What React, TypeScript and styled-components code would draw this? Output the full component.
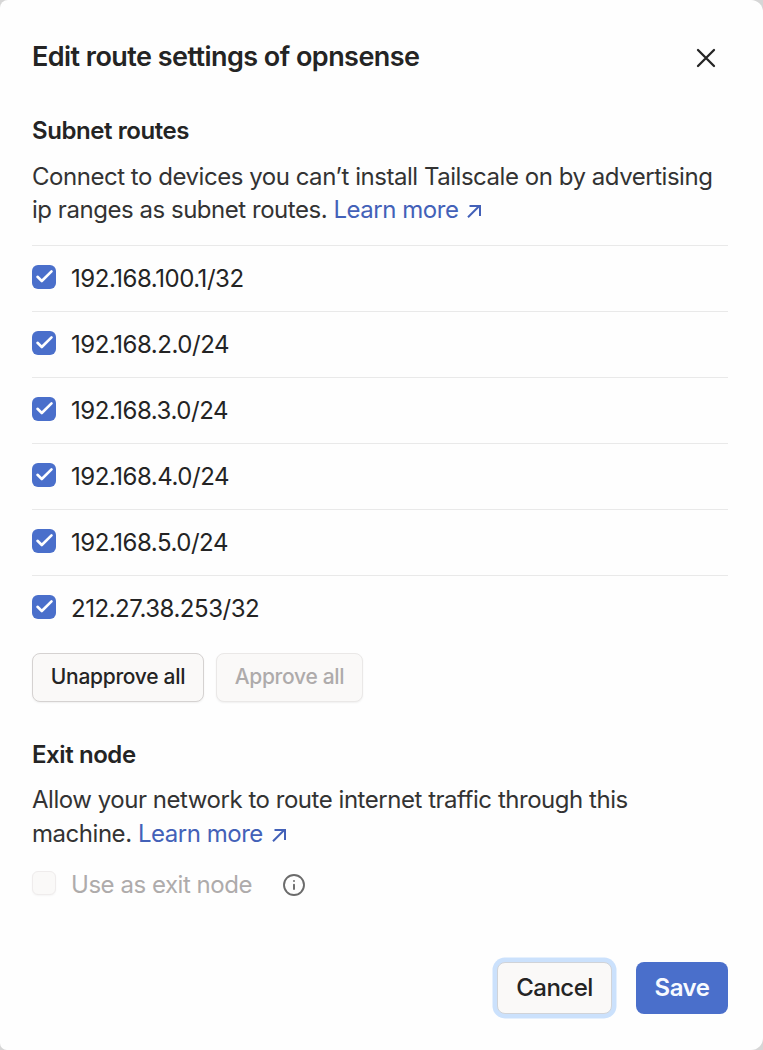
import React from "react";
import styled, { createGlobalStyle } from "styled-components";

const GlobalStyle = createGlobalStyle`
  *, *::before, *::after { box-sizing: border-box; }
  body {
    margin: 0;
    background: #d6d6d6;
    font-family: Inter, "Liberation Sans", sans-serif;
    color: #242424;
  }
`;

const Dialog = styled.main`
  display: flex;
  flex-direction: column;
  width: 763px;
  height: 1050px;
  padding: 40px 35px 36px 32px;
  background: #fefefe;
  border-radius: 8px 12px 12px 7px;
  overflow: hidden;
`;

const Header = styled.header`
  display: flex;
  align-items: center;
  justify-content: space-between;
  height: 33px;
`;

const Title = styled.h1`
  margin: 0;
  font-size: 27px;
  line-height: 33px;
  font-weight: 600;
  letter-spacing: -0.55px;
  white-space: nowrap;
`;

const CloseButton = styled.button`
  display: flex;
  margin: 2px 12px 0 0;
  padding: 0;
  border: 0;
  background: none;
  color: #242424;
`;

const Section = styled.section<{ $top: number }>`
  display: flex;
  flex-direction: column;
  margin-top: ${(p) => p.$top}px;
`;

const SectionTitle = styled.h2`
  margin: 0;
  font-size: 24px;
  line-height: 33px;
  font-weight: 600;
  letter-spacing: -0.42px;
`;

const Description = styled.p<{ $top: number; $lineHeight: number }>`
  margin: ${(p) => p.$top}px 0 0;
  font-size: 24px;
  line-height: ${(p) => p.$lineHeight}px;
  letter-spacing: -0.465px;
  color: #333333;
  white-space: nowrap;
`;

const Link = styled.a`
  color: #4361b8;
  text-decoration: none;

  svg {
    margin-left: 9px;
  }
`;

const RouteList = styled.ul`
  margin: 19px 0 0;
  padding: 0;
  list-style: none;
`;

const RouteItem = styled.li`
  height: 66px;
  padding-top: 16px;
  border-top: 1px solid #e9e9e9;
`;

const CheckLabel = styled.label<{ $disabled?: boolean }>`
  display: flex;
  gap: 15px;
  font-size: 24px;
  line-height: 33px;
  letter-spacing: -0.465px;
  color: ${(p) => (p.$disabled ? "#aeabab" : "#242424")};
  white-space: nowrap;
`;

const CheckBox = styled.span<{ $checked: boolean }>`
  display: flex;
  width: 24px;
  height: 24px;
  margin-top: 3px;
  border-radius: 6px;
  border: ${(p) => (p.$checked ? "0" : "1px solid #efecec")};
  background: ${(p) => (p.$checked ? "#4a6fcb" : "#faf9f8")};
  box-shadow: ${(p) => (p.$checked ? "none" : "0 1px 2px rgba(0, 0, 0, 0.04)")};
`;

const ButtonRow = styled.div`
  display: flex;
  gap: 12px;
  margin-top: 12px;
`;

const SmallButton = styled.button<{ $width: number }>`
  width: ${(p) => p.$width}px;
  height: 49px;
  padding: 0 0 2px;
  border: 1px solid #d5d2d1;
  border-radius: 8px;
  background: #faf9f8;
  box-shadow: 0 1px 2px rgba(0, 0, 0, 0.06);
  font: 500 21px/30px Inter, "Liberation Sans", sans-serif;
  letter-spacing: -0.3px;
  color: #242424;
  white-space: nowrap;

  &:disabled {
    border-color: #eae8e7;
    color: #aeabab;
  }
`;

const ExitRow = styled.div`
  display: flex;
  align-items: center;
  gap: 30px;
  margin-top: 18px;
`;

const Footer = styled.footer`
  display: flex;
  justify-content: flex-end;
  gap: 24px;
  margin-top: auto;
`;

const ActionButton = styled.button<{ $primary?: boolean }>`
  width: ${(p) => (p.$primary ? 92 : 115)}px;
  height: 52px;
  padding: 0 0 2px;
  border: ${(p) => (p.$primary ? "0" : "1px solid #d0d3d8")};
  border-radius: 8px;
  background: ${(p) => (p.$primary ? "#4a6fcb" : "#faf9f8")};
  box-shadow: ${(p) => (p.$primary ? "none" : "0 0 0 4.5px #cbe1fc")};
  color: ${(p) => (p.$primary ? "#f7faff" : "#242424")};
  font: ${(p) => (p.$primary ? 600 : 500)} 24px/33px Inter, "Liberation Sans", sans-serif;
  letter-spacing: -0.5px;
`;

const CheckIcon = () => (
  <svg width="24" height="24" viewBox="0 0 24 24" fill="none" stroke="#fff" strokeWidth="2.6" strokeLinecap="round" strokeLinejoin="round">
    <path d="M5.5 11.8 9.8 16 19.5 6.3" />
  </svg>
);

const ArrowIcon = () => (
  <svg width="14" height="14" viewBox="0 0 14 14" fill="none" stroke="currentColor" strokeWidth="2">
    <path d="M1 13.3 12.5 1.8M2.5 2H13V12" />
  </svg>
);

const InfoIcon = () => (
  <svg width="24" height="24" viewBox="0 0 24 24" fill="none" stroke="#6b6b6b" strokeWidth="1.9" strokeLinecap="round">
    <circle cx="12" cy="12" r="10" />
    <path d="M12 11.7V16M12 8H12.01" />
  </svg>
);

const LearnMore = () => (
  <Link>
    Learn more
    <ArrowIcon />
  </Link>
);

const routes = [
  "192.168.100.1/32",
  "192.168.2.0/24",
  "192.168.3.0/24",
  "192.168.4.0/24",
  "192.168.5.0/24",
  "212.27.38.253/32",
];

export default function App() {
  return (
    <>
      <GlobalStyle />
      <Dialog>
        <Header>
          <Title>Edit route settings of opnsense</Title>
          <CloseButton aria-label="Close">
            <svg width="20" height="20" viewBox="0 0 20 20" fill="none" stroke="currentColor" strokeWidth="2.3" strokeLinecap="round">
              <path d="M2 2 18 18M18 2 2 18" />
            </svg>
          </CloseButton>
        </Header>

        <Section $top={41}>
          <SectionTitle>Subnet routes</SectionTitle>
          <Description $top={13} $lineHeight={33}>
            Connect to devices you can’t install Tailscale on by advertising
            <br />
            ip ranges as subnet routes. <LearnMore />
          </Description>
          <RouteList>
            {routes.map((route) => (
              <RouteItem key={route}>
                <CheckLabel>
                  <CheckBox $checked>
                    <CheckIcon />
                  </CheckBox>
                  {route}
                </CheckLabel>
              </RouteItem>
            ))}
          </RouteList>
          <ButtonRow>
            <SmallButton $width={172}>Unapprove all</SmallButton>
            <SmallButton $width={147} disabled>
              Approve all
            </SmallButton>
          </ButtonRow>
        </Section>

        <Section $top={36}>
          <SectionTitle>Exit node</SectionTitle>
          <Description $top={12} $lineHeight={33.5}>
            Allow your network to route internet traffic through this
            <br />
            machine. <LearnMore />
          </Description>
          <ExitRow>
            <CheckLabel $disabled>
              <CheckBox $checked={false} />
              Use as exit node
            </CheckLabel>
            <InfoIcon />
          </ExitRow>
        </Section>

        <Footer>
          <ActionButton>Cancel</ActionButton>
          <ActionButton $primary>Save</ActionButton>
        </Footer>
      </Dialog>
    </>
  );
}
